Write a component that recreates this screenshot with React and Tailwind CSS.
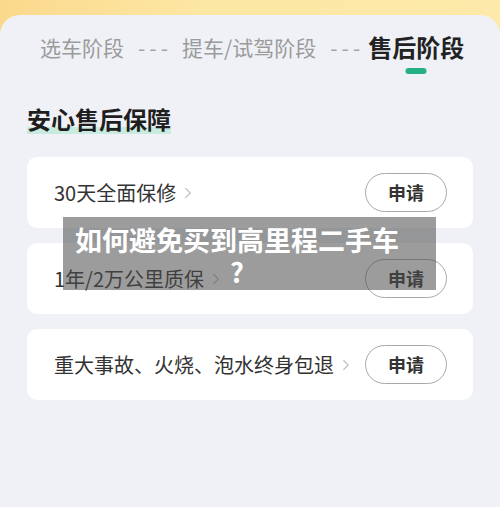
import { ChevronRight } from 'lucide-react'

const items = ['30天全面保修', '1年/2万公里质保', '重大事故、火烧、泡水终身包退']

function Dash() {
  return (
    <span className="flex w-[30px] justify-between text-[21px] text-[#a3a3a3]">
      <span>-</span>
      <span>-</span>
      <span>-</span>
    </span>
  )
}

export default function App() {
  return (
    <div
      className="relative h-[507px] w-[500px] overflow-hidden bg-[linear-gradient(90deg,#fbd98c,#fde7a4_40%,#fde9a9)]"
      style={{ fontFamily: '"Noto Sans CJK SC", "Noto Sans", sans-serif' }}
    >
      <div className="mt-[15px] flex h-[492px] flex-col rounded-t-[20px] bg-[#eff1f6]">
        {/* stage tabs */}
        <div className="mt-[18px] flex h-[28px] items-center pl-[40px] leading-[28px]">
          <span className="text-[21px] text-[#9b9b9b]">选车阶段</span>
          <span className="ml-[14px]"><Dash /></span>
          <span className="ml-[14px] text-[21px] text-[#9b9b9b]">提车/试驾阶段</span>
          <span className="ml-[14px]"><Dash /></span>
          <span className="relative ml-[8px] text-[24px] font-semibold text-[#222]">
            售后阶段
            <span className="absolute left-1/2 top-[35px] h-[6px] w-[21px] -translate-x-1/2 rounded-full bg-[#25b081]" />
          </span>
        </div>

        {/* section title */}
        <div className="ml-[27px] mt-[44px]">
          <span className="relative isolate inline-block text-[24px] font-bold leading-[28px] text-[#1e1e1e]">
            <span className="absolute -bottom-[1px] left-0 right-0 -z-10 h-[7px] bg-[#c9eadf]" />
            安心售后保障
          </span>
        </div>

        <div className="mx-[27px] mt-[23px] flex flex-col gap-[15px]">
          {items.map(t => (
            <div key={t} className="flex h-[71px] items-center justify-between rounded-[10px] bg-white pl-[27px] pr-[26px]">
              <div className="flex items-center">
                <span className="text-[20px] text-[#333]">{t}</span>
                <ChevronRight className="ml-[3px] h-[18px] w-[18px] text-[#c2c2c2]" strokeWidth={1.6} />
              </div>
              <button className="flex h-[39px] w-[82px] items-center justify-center rounded-full border border-[#a9a9a9] text-[18px] font-bold text-[#333]">
                申请
              </button>
            </div>
          ))}
        </div>
      </div>

      {/* caption overlay */}
      <div className="absolute left-[63px] top-[217px] flex h-[73px] w-[373px] justify-center bg-[rgba(75,75,75,0.55)] pr-[25px] pt-[7px]">
        <p className="whitespace-nowrap text-center text-[27px] font-bold leading-[32px] text-white">
          如何避免买到高里程二手车
          <br />?
        </p>
      </div>
    </div>
  )
}
